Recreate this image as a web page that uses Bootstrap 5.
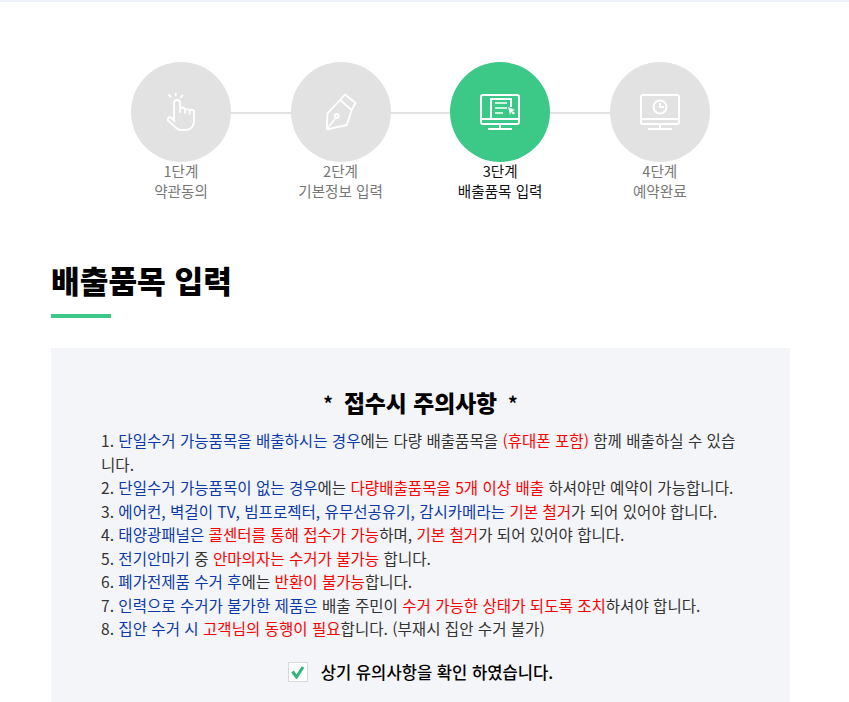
<!DOCTYPE html>
<html lang="ko">
<head>
<meta charset="UTF-8">
<title>배출품목 입력</title>
<link href="https://cdn.jsdelivr.net/npm/bootstrap@5.3.0/dist/css/bootstrap.min.css" rel="stylesheet">
<style>
body { font-family: "Noto Sans CJK KR", "Liberation Sans", sans-serif; background: #fff; color: #222; overflow: hidden; }
.top-line { height: 2px; background: #eef0fa; }
.page-wrap { width: 739px; margin-left: 51px; }
.step-row { padding-top: 60px; margin-left: 50.2px; }
.step-item { flex: 0 0 159.6px; text-align: center; position: relative; font-size: 14.6px; line-height: 20px; color: #777; }
.step-item::after { content: ""; position: absolute; left: 50%; top: 50px; width: 160px; height: 2px; background: #e2e2e2; }
.step-item:last-child::after { display: none; }
.step-circle { width: 100px; height: 100px; border-radius: 50%; background: #e2e2e2; margin: 0 auto -1px; position: relative; z-index: 1; display: flex; align-items: center; justify-content: center; }
.step-now .step-circle { background: #3cc988; }
.step-now { color: #111; }
.page-title { font-size: 31.2px; font-weight: 900; color: #000; margin: 57px 0 0; line-height: 44px; }
.title-bar { width: 60px; height: 4px; background: #3cc988; margin-top: 12px; margin-bottom: 30px; }
.notice-box { background: #f4f5f9; padding: 37px 50px 0; height: 354px; }
.notice-title { font-size: 22.8px; font-weight: 900; color: #000; line-height: 36px; margin-bottom: 8px; }
.note-star { font-size: 19px; font-weight: 700; margin: 0 11px; }
.notice-list { font-size: 15.57px; line-height: 23.5px; color: #333; list-style: none; padding: 0; margin: 0; word-break: break-all; }
.t-blue { color: #0b3aa8; }
.t-red { color: #f00; }
.agree-row { font-size: 16.6px; font-weight: 500; color: #000; margin-top: 19px; }
.agree-check { width: 20px; height: 20px; background: #fff; border: 1px solid #d8d8d8; margin-right: 13px; }
</style>
</head>
<body>
<div class="top-line"></div>
<div class="page-wrap">
  <div class="step-row d-flex">
    <div class="step-item">
      <div class="step-circle">
        <svg width="30" height="38" viewBox="0 0 30 38" fill="none" stroke="#fff" stroke-width="1.800" stroke-linecap="round" stroke-linejoin="round"><path d="M8 26V10a3 3 0 0 1 6 0v9M14 17a2.500 2.500 0 0 1 5 0v3M19 18a2.300 2.300 0 0 1 4.500 0v3M23.500 19a2.200 2.200 0 0 1 4.500 0v9c0 5-3 9-8 9h-5c-3 0-5-2-7-4l-5.500-5c-2-2 0-5 3-3l3 3"/><path d="M4.700 3.700L3 2M9.700 2.500V.8M14.700 4.300L16.500 2.500"/></svg>
      </div>
      1단계<br>약관동의
    </div>
    <div class="step-item">
      <div class="step-circle">
        <svg width="32" height="38" viewBox="0 0 32 38" fill="none" stroke="#fff" stroke-width="1.800" stroke-linejoin="round"><path d="M1.700 36.300L2.500 20.300L15 7L26.700 17L21.700 32Z"/><path d="M15 7L20 1.500L30.500 10L26.700 17M1.700 36.300L10 26"/><circle cx="11.700" cy="23" r="2"/></svg>
      </div>
      2단계<br>기본정보 입력
    </div>
    <div class="step-item step-now">
      <div class="step-circle">
        <svg width="40" height="37" viewBox="0 0 40 37" fill="none" stroke="#fff" stroke-width="2"><rect x="1" y="1" width="38" height="29" rx="2"/><path d="M1 25h38M20 30v5M8 35h24"/><path d="M11 25V5h20v8" stroke-width="2"/><path d="M15 9h12M15 14h12M15 19h8" stroke-width="1.600"/><path d="M28 13l7 3-3 1 3 2-1.500 1.500-2.500-2.500-1 3z" fill="#fff" stroke="none"/></svg>
      </div>
      3단계<br>배출품목 입력
    </div>
    <div class="step-item">
      <div class="step-circle">
        <svg width="40" height="37" viewBox="0 0 40 37" fill="none" stroke="#fff" stroke-width="2"><rect x="1" y="1" width="38" height="29" rx="2"/><path d="M1 25h38M20 30v5M8 35h24"/><circle cx="20" cy="13" r="6.500"/><path d="M20 9v4h4"/></svg>
      </div>
      4단계<br>예약완료
    </div>
  </div>

  <h2 class="page-title">배출품목 입력</h2>
  <div class="title-bar"></div>

  <div class="notice-box">
    <div class="notice-title d-flex justify-content-center align-items-center"><span class="note-star">*</span><span>접수시 주의사항</span><span class="note-star">*</span></div>
    <ol class="notice-list">
      <li>1. <span class="t-blue">단일수거 가능품목을 배출하시는 경우</span>에는 다량 배출품목을 <span class="t-red">(휴대폰 포함)</span> 함께 배출하실 수 있습니다.</li>
      <li>2. <span class="t-blue">단일수거 가능품목이 없는 경우</span>에는 <span class="t-red">다량배출품목을 5개 이상 배출</span> 하셔야만 예약이 가능합니다.</li>
      <li>3. <span class="t-blue">에어컨, 벽걸이 TV, 빔프로젝터, 유무선공유기, 감시카메라는</span> <span class="t-red">기본 철거</span>가 되어 있어야 합니다.</li>
      <li>4. <span class="t-blue">태양광패널은</span> <span class="t-red">콜센터를 통해 접수가 가능</span>하며, <span class="t-red">기본 철거</span>가 되어 있어야 합니다.</li>
      <li>5. <span class="t-blue">전기안마기</span> 중 <span class="t-red">안마의자는 수거가 불가능</span> 합니다.</li>
      <li>6. <span class="t-blue">폐가전제품 수거 후</span>에는 <span class="t-red">반환이 불가능</span>합니다.</li>
      <li>7. <span class="t-blue">인력으로 수거가 불가한 제품은</span> 배출 주민이 <span class="t-red">수거 가능한 상태가 되도록 조치</span>하셔야 합니다.</li>
      <li>8. <span class="t-blue">집안 수거 시</span> <span class="t-red">고객님의 동행이 필요</span>합니다. (부재시 집안 수거 불가)</li>
    </ol>
    <div class="agree-row d-flex justify-content-center align-items-center">
      <span class="agree-check d-flex align-items-center justify-content-center">
        <svg width="14" height="14" viewBox="0 0 14 14" fill="none" stroke="#2fb67a" stroke-width="3"><path d="M1.500 6.500l4 5.500 6.500-10"/></svg>
      </span>
      <span>상기 유의사항을 확인 하였습니다.</span>
    </div>
  </div>
</div>
<script src="https://cdn.jsdelivr.net/npm/bootstrap@5.3.0/dist/js/bootstrap.bundle.min.js"></script>
</body>
</html>
